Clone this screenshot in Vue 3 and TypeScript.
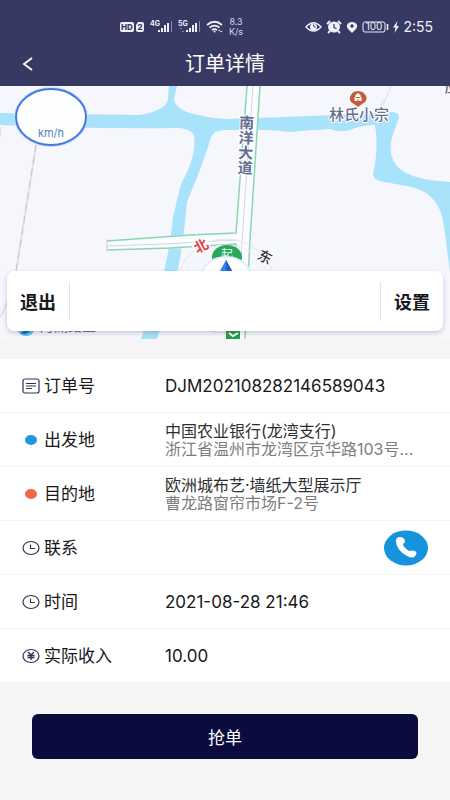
<script setup lang="ts">
type IconName = 'note' | 'start' | 'end' | 'clock' | 'yen'

interface OrderRow {
  icon: IconName
  label: string
  value?: string
  detail?: string
  call?: boolean
}

const rows: OrderRow[] = [
  { icon: 'note', label: '订单号', value: 'DJM202108282146589043' },
  { icon: 'start', label: '出发地', value: '中国农业银行(龙湾支行)', detail: '浙江省温州市龙湾区京华路103号...' },
  { icon: 'end', label: '目的地', value: '欧洲城布艺·墙纸大型展示厅', detail: '曹龙路窗帘市场F-2号' },
  { icon: 'clock', label: '联系', call: true },
  { icon: 'clock', label: '时间', value: '2021-08-28 21:46' },
  { icon: 'yen', label: '实际收入', value: '10.00' },
]
</script>

<template>
  <div class="page">
    <header class="header">
      <div class="status">
        <div class="status-group">
          <svg class="hd" width="25" height="12" viewBox="0 0 25 12">
            <rect x="0" y="1" width="14" height="10" rx="2" fill="#eef0fc" />
            <text x="7" y="9" text-anchor="middle" class="badge-text">HD</text>
            <path d="M18 1h4a2 2 0 0 1 2 2v6a2 2 0 0 1-2 2h-4a2 2 0 0 1-2-2V4z" fill="#eef0fc" />
            <text x="20" y="9" text-anchor="middle" class="badge-text">2</text>
          </svg>
          <svg v-for="net in ['4G', '5G']" :key="net" width="23" height="14" viewBox="0 0 23 14">
            <text x="0" y="6" class="net-text">{{ net }}</text>
            <path d="M9 12v-2M12 12V8M15 12V5M18 12V3" stroke="#eef0fc" stroke-width="2" />
            <path d="M21.500 12V1" stroke="#8587b2" stroke-width="1" />
            <path v-if="net === '5G'" d="M2 9l1-1 1 1M4 11l1 1 1-1" fill="none" stroke="#8587b2" />
          </svg>
          <svg width="18" height="14" viewBox="0 0 18 14" fill="none" stroke="#eef0fc" stroke-width="1.700">
            <path d="M1 5Q8.500-1.500 16 5M3.500 7.700Q8.500 3.500 13.500 7.700M6 10.200Q8.500 8.200 11 10.200" />
            <circle cx="8.500" cy="11.500" r="1" fill="#eef0fc" stroke="none" />
            <path d="M12 11l1.200-1.500L14.500 11zM14 11l1.200 1.500L16.500 11z" fill="#eef0fc" stroke="none" />
          </svg>
          <div class="speed"><span>8.3</span><span>K/s</span></div>
        </div>
        <div class="status-group right">
          <svg width="17" height="12" viewBox="0 0 17 12">
            <path d="M1 6Q8.500-2.500 16 6Q8.500 14 1 6z" fill="none" stroke="#eef0fc" stroke-width="1.500" />
            <circle cx="8.500" cy="6" r="3.500" fill="#eef0fc" />
            <path d="M8.500 3.500a2.500 2.500 0 0 0 2 3" fill="none" stroke="#373963" />
          </svg>
          <svg width="16" height="14" viewBox="0 0 16 14">
            <ellipse cx="8" cy="7" rx="6" ry="5.500" fill="#eef0fc" />
            <path d="M1 4L4 1M15 4L12 1M4 11l-2 2M12 11l2 2" stroke="#eef0fc" stroke-width="1.800" />
            <path d="M8 4v3.500l2.500 1" fill="none" stroke="#373963" stroke-width="1.200" />
          </svg>
          <svg width="12" height="13" viewBox="0 0 12 13">
            <path d="M6 12L2 8Q0 5 1.500 3Q3 1 6 1T10.500 3Q12 5 10 8z" fill="#eef0fc" />
            <circle cx="6" cy="5" r="1.700" fill="#373963" />
          </svg>
          <svg width="27" height="12" viewBox="0 0 27 12">
            <rect x="1" y="1" width="22" height="10" rx="2" fill="none" stroke="#eef0fc" />
            <text x="12" y="9" text-anchor="middle" class="battery-text">100</text>
            <path d="M25.500 3v6" stroke="#eef0fc" stroke-width="1.500" />
          </svg>
          <svg width="6" height="12" viewBox="0 0 6 12">
            <path d="M4.500 0L0 6.500h2.500L1.500 12 6 5H3.500z" fill="#eef0fc" />
          </svg>
          <span class="time">2:55</span>
        </div>
      </div>
      <nav class="nav">
        <button class="back" type="button" aria-label="返回">
          <svg width="12" height="14" viewBox="0 0 12 14">
            <path d="M10 1L2 7l8 6" fill="none" stroke="#fff" stroke-width="1.800" />
          </svg>
        </button>
        <h1>订单详情</h1>
      </nav>
    </header>

    <section class="map">
      <svg class="map-art" viewBox="0 86 450 253" preserveAspectRatio="xMidYMid slice">
        <rect y="86" width="450" height="253" fill="#f6f7fd" />
        <g fill="#a9e2fb">
          <path d="M0 113L140 115Q168 110 168 98L169 86H177L174 99Q175 108 190 113Q208 118 225 119Q290 117 335 115L390 112Q402 112 398 120L392 137Q387 158 400 169Q413 180 450 182V272L447 250Q444 219 439 208Q430 190 407 186L384 182Q373 180 373 174Q379 148 375 125Q361 125 350 130Q340 133 330 129Q310 130 290 132Q267 129 225 130Q214 130 211 137Q206 156 187 202Q184 238 178 270L157 339H141L164 271Q171 241 173 217L181 184Q197 155 194 137Q193 129 178 128Q90 129 0 125z" />
        </g>
        <path d="M36 145L15 278Q8 305 0 317" fill="none" stroke="#e2e3e9" stroke-width="2" />
        <path d="M36 145L15 278" fill="none" stroke="#c3c4cb" stroke-dasharray="7 5" />
        <path d="M391 86L380 112M383 100L378 112" fill="none" stroke="#dcdde6" />
        <path d="M0 127V137" stroke="#c9cad2" />
        <path d="M247 86L236 233L180 235L107 241V250L200 248L236 245V339H245L251 240L260 86z" fill="#fbfcff" />
        <g fill="none" stroke="#89d7ae" stroke-width="1.500">
          <path d="M247 86L236 233L190 235L107 241M107 250L170 248L236 244L233 339" />
          <path d="M260 86L250 240L245 339" />
        </g>
        <path d="M253 86L242 240L238 339M107 246L165 244L237 240" fill="none" stroke="#d4d7e0" />
        <path d="M107 239V251" stroke="#e6bdcb" />
        <ellipse cx="226" cy="286" rx="49" ry="47" fill="none" stroke="#e5e6ef" />
        <ellipse cx="226" cy="286" rx="44" ry="41" fill="none" stroke="#eceef5" />

        <text class="road-name" x="246" y="115" transform="rotate(2 246 115)">南洋大道</text>

        <path d="M358 107L354 104Q349 102 350 97Q352 91 358 91T366.500 97Q367 102 362 104z" fill="#c45c3a" />
        <path d="M358 93l2.500 2v2h1v4h-7v-4h1v-2z" fill="#fff" />
        <path d="M356 97.500h4M358 99v2" stroke="#c45c3a" />
        <text class="place" x="359" y="120">林氏小宗</text>
        <text class="place" x="452" y="92">应</text>

        <ellipse cx="227" cy="257" rx="15" ry="12" fill="#27a85a" />
        <text class="start-pin" x="227" y="259">起</text>
        <ellipse cx="226" cy="277" rx="25" ry="20" fill="#fff" stroke="#e1efff" stroke-width="2" />
        <path d="M226 260L216 278H236z" fill="#3b82ed" />
        <path d="M226 260L236 278H226z" fill="#235fc4" />
        <circle cx="201" cy="246" r="9" fill="#f8f8fd" />
        <text class="north" x="201" y="251" transform="rotate(-28 201 246)">北</text>
        <circle cx="265" cy="257" r="9" fill="#f8f8fd" />
        <text class="east" x="265" y="262" transform="rotate(28 265 257)">东</text>

        <ellipse cx="26" cy="330" rx="8" ry="6" fill="#58bdf4" />
        <path d="M22 334l3-4v3l4-2" fill="none" stroke="#156bb2" stroke-width="2" />
        <text class="faded" x="68" y="331">月湖路五</text>
        <rect x="226" y="325" width="14" height="14" fill="#289c4b" />
        <path d="M229 333l4 3 5-3" fill="none" stroke="#fff" stroke-width="2" />

        <ellipse cx="51" cy="117" rx="36" ry="29" fill="none" stroke="#c9dffd" stroke-width="2" />
        <ellipse cx="51" cy="117" rx="35" ry="28" fill="#fdffff" stroke="#4678de" stroke-width="2" />
        <text class="kmh" x="51" y="137">km/h</text>
      </svg>
      <div class="map-bar">
        <button type="button">退出</button>
        <div class="map-bar-space"></div>
        <button type="button">设置</button>
      </div>
    </section>

    <main class="list">
      <div v-for="row in rows" :key="row.label" class="row">
        <div class="label">
          <svg width="18" height="16" viewBox="0 0 18 16" fill="none" stroke="#34324e" stroke-width="1.200">
            <template v-if="row.icon === 'note'">
              <rect x="1" y="1" width="16" height="14" rx="2" />
              <path d="M4 5.500h10M4 8h10M4 10.500h6" />
            </template>
            <ellipse v-else-if="row.icon === 'start'" cx="9" cy="8" rx="6" ry="5" fill="#2296dc" stroke="none" />
            <ellipse v-else-if="row.icon === 'end'" cx="9" cy="8" rx="6" ry="5" fill="#f2694a" stroke="none" />
            <template v-else-if="row.icon === 'clock'">
              <ellipse cx="9" cy="8" rx="8" ry="6.500" />
              <path d="M8.500 4.500V8.500H13" />
            </template>
            <template v-else>
              <ellipse cx="9" cy="8" rx="8" ry="6.500" />
              <path d="M6 4l3 3 3-3M5.500 7.500h7M5.500 9.500h7M9 7v5" stroke-width="1.400" />
            </template>
          </svg>
          <span>{{ row.label }}</span>
        </div>
        <div v-if="row.value" class="value" :class="{ address: row.detail }">
          <p>{{ row.value }}</p>
          <p v-if="row.detail" class="detail">{{ row.detail }}</p>
        </div>
        <button v-if="row.call" class="call" type="button" aria-label="拨打电话">
          <svg width="44" height="36" viewBox="0 0 44 36">
            <ellipse cx="22" cy="18" rx="22" ry="17.500" fill="#1593dc" />
            <path d="M12 11Q12 7 16 7Q20 7 21 11Q21 13 19 14Q19 17 25 21Q28 20 31 21Q34 23 31 26Q29 29 23 26Q12 20 12 11z" fill="#fff" />
          </svg>
        </button>
      </div>
    </main>

    <footer class="footer">
      <button class="grab" type="button">抢单</button>
    </footer>
  </div>
</template>

<style>
body {
  margin: 0;
  background: #f5f5f6;
}
</style>

<style scoped>
.page {
  min-height: 100vh;
  background: #f5f5f6;
  color: #17171a;
  font-family: Inter, "Noto Sans CJK SC", sans-serif;
}
button {
  padding: 0;
  border: 0;
  background: none;
  color: inherit;
  font-family: inherit;
  cursor: pointer;
}
svg {
  display: block;
  flex-shrink: 0;
}
.header {
  height: 86px;
  background: #373963;
  color: #fff;
}
.status {
  display: flex;
  align-items: center;
  justify-content: space-between;
  height: 42px;
  padding: 12px 17px 0 120px;
  box-sizing: border-box;
}
.status-group {
  display: flex;
  align-items: center;
  gap: 5px;
}
.right {
  gap: 4px;
}
.badge-text {
  font-size: 8px;
  font-weight: 800;
  fill: #373963;
}
.net-text {
  font-size: 7px;
  font-weight: 700;
  fill: #eef0fc;
}
.battery-text {
  font-size: 10px;
  fill: #eef0fc;
}
.speed {
  display: flex;
  flex-direction: column;
  font-size: 9px;
  line-height: 10px;
  text-align: center;
  color: #d6d8ee;
}
.time {
  font-size: 14px;
  line-height: 16px;
  color: #eef0fc;
}
.nav {
  display: grid;
  grid-template-columns: 56px 1fr 56px;
  align-items: center;
  height: 44px;
}
.back {
  display: flex;
  align-items: center;
  height: 44px;
  padding-left: 22px;
}
h1 {
  margin: 0;
  font-size: 20px;
  line-height: 28px;
  font-weight: 400;
  text-align: center;
}
.map {
  position: relative;
  margin-bottom: 20px;
}
.map-art {
  width: 100%;
  height: 253px;
}
.map-art text {
  text-anchor: middle;
}
.map-art .road-name {
  writing-mode: vertical-rl;
  text-anchor: start;
  font-size: 15px;
  font-weight: 700;
  fill: #636d91;
  stroke: #fff;
  stroke-width: 2px;
  paint-order: stroke;
}
.place {
  font-size: 15px;
  font-weight: 500;
  fill: #65708f;
  stroke: #fff;
  stroke-width: 2px;
  paint-order: stroke;
}
.start-pin {
  font-size: 12px;
  fill: #fff;
}
.north {
  font-size: 14px;
  font-weight: 700;
  fill: #d84848;
}
.east {
  font-size: 14px;
  font-weight: 500;
  fill: #303138;
}
.faded {
  font-size: 14px;
  fill: #6d7585;
}
.kmh {
  font-size: 11px;
  fill: #5480bd;
}
.map-bar {
  position: absolute;
  left: 7px;
  right: 7px;
  bottom: 8px;
  display: flex;
  align-items: center;
  height: 60px;
  border-radius: 7px;
  background: #fff;
  box-shadow: 0 2px 5px rgb(60 60 80 / 25%);
}
.map-bar button {
  width: 62px;
  height: 60px;
  font-size: 18px;
  font-weight: 700;
}
.map-bar-space {
  flex: 1;
  height: 39px;
  border: solid #e4e4e6;
  border-width: 0 1px;
}
.list {
  background: #fff;
}
.row {
  display: flex;
  align-items: center;
  height: 54px;
  padding: 0 22px;
  box-sizing: border-box;
  border-bottom: 1px solid #f4f4f5;
}
.label {
  display: flex;
  align-items: center;
  gap: 4px;
  flex: 0 0 143px;
  font-size: 17px;
  line-height: 24px;
}
.value {
  flex: 1;
  min-width: 0;
  font-size: 17px;
  line-height: 24px;
}
.value p {
  margin: 0;
  overflow: hidden;
  text-overflow: ellipsis;
  white-space: nowrap;
}
.value.address {
  font-size: 16px;
  line-height: 18px;
  color: #2f2f31;
}
.address .detail {
  color: #7d7d80;
}
.call {
  margin-left: auto;
  border-radius: 50%;
}
.footer {
  padding: 31px 32px 40px;
}
.grab {
  width: 100%;
  height: 45px;
  border-radius: 6px;
  background: #0c0b3e;
  color: #fff;
  font-size: 17px;
}
</style>
